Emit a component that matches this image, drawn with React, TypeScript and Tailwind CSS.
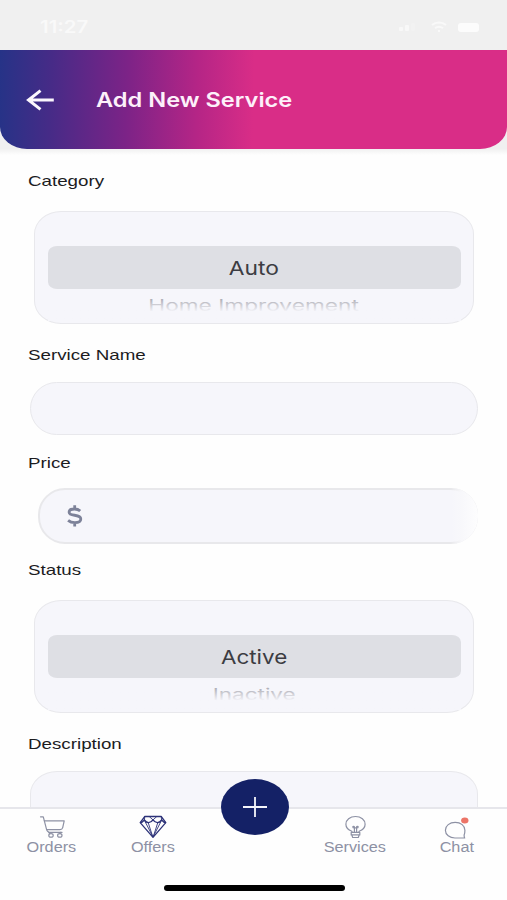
import { useState } from 'react';
import type { ReactNode } from 'react';

interface PickerProps {
  selected: string;
  next: string;
  selectedClass: string;
  nextClass: string;
}

function FieldLabel({ children, className }: { children: ReactNode; className: string }) {
  return (
    <div className={`flex items-center h-5 ml-7 text-[15px] leading-5 text-[#1c1c1e] ${className}`}>
      <span className="inline-block whitespace-nowrap origin-left scale-x-[1.25]">{children}</span>
    </div>
  );
}

function Picker({ selected, next, selectedClass, nextClass }: PickerProps) {
  return (
    <div className="ml-[34px] w-[440px] h-[113px] pt-[34px] px-[12.5px] rounded-[27px/23px] border-[1.5px] border-[#e8e8ec] bg-[#f6f6fb] font-['Inter',sans-serif]">
      <div className="h-[43px] rounded-[9px/7px] bg-[#dedfe4] flex items-center justify-center">
        <span className={`inline-block pt-[2px] text-[19px] leading-6 text-[#3c3c42] ${selectedClass}`}>{selected}</span>
      </div>
      {/* next option fades out towards the bottom of the wheel */}
      <div className="relative h-[32px] flex justify-center pt-[7px]">
        <span className={`inline-block h-6 whitespace-nowrap text-[18px] leading-6 text-[#a4a4ac] origin-top ${nextClass}`}>{next}</span>
        <div className="absolute inset-0 bg-linear-to-b from-[#f6f6fb]/0 from-25% to-[#f6f6fb] to-72%" />
      </div>
    </div>
  );
}

function CartIcon() {
  return (
    <svg width="28" height="24" viewBox="0 0 28 24" fill="none" stroke="#8d91a4" strokeWidth="1.2" strokeLinecap="round" strokeLinejoin="round">
      <path d="M2.5 1.8H5.3L8.6 14.6C8.9 15.9 9.4 16.6 11 17.4H24" />
      <path d="M6.3 5.8H26.2L24.7 12.6C24.4 13.9 23.6 14.6 22 14.6H8.6" />
      <path d="M11 17.4L11.6 18.6M22.6 17.4L22 18.6" />
      <ellipse cx="13" cy="20.4" rx="2.2" ry="1.8" />
      <ellipse cx="21.8" cy="20.4" rx="2.2" ry="1.8" />
    </svg>
  );
}

function DiamondIcon() {
  return (
    <svg width="28" height="24" viewBox="0 0 28 24" fill="none" stroke="#2c3278" strokeWidth="1.3" strokeLinejoin="round">
      <path d="M5.8 1.5H22.2L26.8 7.6L14 22.4L1.2 7.6Z" />
      <path d="M1.2 7.6C3.4 7.4 4.5 6.1 5.4 5C6.6 6.6 8 7.6 9.6 7.6C11.6 7.6 13.1 6.2 14 4.9C14.9 6.2 16.4 7.6 18.4 7.6C20 7.6 21.4 6.6 22.6 5C23.5 6.1 24.6 7.4 26.8 7.6" />
      <path d="M5.8 1.5L5.4 5M22.2 1.5L22.6 5M10.2 1.5L14 4.9L17.8 1.5M9.2 7.6L13.8 22M18.8 7.6L14.2 22M5.4 5.3L14 22M22.6 5.3L14 22" strokeWidth="0.9" />
    </svg>
  );
}

function BulbIcon() {
  return (
    <svg width="28" height="24" viewBox="0 0 28 24" fill="none" stroke="#8d91a4" strokeWidth="1.2" strokeLinejoin="round">
      <path d="M10.9 17.4V16.2C7.4 15 4.9 12.5 4.9 9.2C4.9 5 8.9 1.5 14.5 1.5C20.1 1.5 24.1 5 24.1 9.2C24.1 12.5 21.6 15 18.1 16.2V17.4" />
      <path d="M10.2 17.4H18.8V19.9H10.2ZM10.8 19.9H18.2L17.3 22.5H11.7Z" />
      <path d="M13.4 17.2V11.9C13.4 11.1 11.8 11 11.8 12C11.8 12.8 12.6 12.9 13.4 12.9H15.6C16.4 12.9 17.2 12.8 17.2 12C17.2 11 15.6 11.1 15.6 11.9V17.2" />
    </svg>
  );
}

function ChatIcon() {
  return (
    <svg width="28" height="24" viewBox="0 0 28 24" fill="none" stroke="#8d91a4" strokeWidth="1.2" strokeLinejoin="round">
      <path d="M21.7 23H12C6.6 23 2.4 19.8 2.4 15.2C2.4 10.8 6.6 7.4 12.2 7.4C17.8 7.4 21.9 10.8 21.9 15.2C21.9 17.4 21.7 19 21.1 20.1C21.1 21.5 21.3 22.4 21.7 23Z" />
      <ellipse cx="21.8" cy="5.6" rx="3.7" ry="3" fill="#ec7467" stroke="none" />
    </svg>
  );
}

const tabs = [
  { label: 'Orders', icon: <CartIcon />, place: 'w-[103px]' },
  { label: 'Offers', icon: <DiamondIcon />, place: 'w-[99px]' },
  { label: 'Services', icon: <BulbIcon />, place: 'w-[102px] ml-[102px]' },
  { label: 'Chat', icon: <ChatIcon />, place: 'w-[101px]' },
];

export default function App() {
  const [category] = useState('Auto');
  const [status] = useState('Active');

  return (
    <div className="w-[507px] h-[900px] overflow-hidden flex flex-col bg-[#fefefe] font-['Liberation_Sans',Arial,sans-serif]">
      {/* Status bar */}
      <div className="h-[50px] shrink-0 bg-[#f0f0f0] flex items-start justify-between pt-[16px] pl-[40px] pr-[28px]">
        <span className="inline-block origin-left scale-x-[1.2] text-[17px] leading-[22px] font-semibold text-[#f9f9f9] font-['Inter',sans-serif]">11:27</span>
        <div className="flex items-center gap-[11px] h-[22px]">
          <svg width="22" height="12" viewBox="0 0 22 12">
            <rect x="1" y="6" width="4" height="4" rx="1" fill="#f8f8f8" />
            <rect x="7" y="4" width="4" height="6" rx="1" fill="#f8f8f8" />
            <rect x="13" y="2" width="4" height="8" rx="1" fill="#f2f2f2" />
          </svg>
          <svg width="16" height="12" viewBox="0 0 16 12" fill="none" stroke="#f9f9f9" strokeWidth="2">
            <path d="M1 4C5 .8 11 .8 15 4M4 7.3C6.5 5.4 9.5 5.4 12 7.3M7 10H9" />
          </svg>
          <div className="w-[21px] h-[9px] rounded-[3px] bg-[#fcfcfc]" />
        </div>
      </div>

      {/* Header */}
      <div className="h-[105px] shrink-0 bg-linear-to-b from-[#f0f0f0] from-94% to-[#fefefe]">
        <div className="h-[99px] rounded-b-[27px_22px] bg-[linear-gradient(91deg,#263387_0%,#462b87_10%,#7c2387_25%,#b52586_39%,#d92d87_50%,#d92d87_100%)] flex items-center">
          <svg className="ml-[26px]" width="29" height="22" viewBox="0 0 29 22" fill="none" stroke="#fbf7fd" strokeWidth="3">
            <path d="M27.8 11H2.5M14.5 1.6L2.5 11L14.5 20.4" />
          </svg>
          <h1 className="ml-[41px] origin-left scale-x-[1.18] whitespace-nowrap text-[20px] leading-7 font-semibold text-[#fdf0fa] font-['Inter',sans-serif]">Add New Service</h1>
        </div>
      </div>

      {/* Form */}
      <div className="h-[652px] shrink-0 overflow-hidden">
        <FieldLabel className="mt-[16px]">Category</FieldLabel>
        <div className="h-[20px]" />
        <Picker selected={category} next="Home Improvement" selectedClass="scale-x-[1.2]" nextClass="scale-x-[1.26] scale-y-[0.85]" />

        <FieldLabel className="mt-[21px]">Service Name</FieldLabel>
        <div className="mt-[17px] ml-[30px] w-[448px] h-[53px] rounded-[27px] border-[1.5px] border-[#e8e8ec] bg-[#f6f6fb]" />

        <FieldLabel className="mt-[18px]">Price</FieldLabel>
        <div className="relative mt-[15px] ml-[38px] w-[440px] h-[56px] rounded-[27px] border-2 border-[#e8e8eb] bg-[#f6f6fb] flex items-center pl-[25px]">
          <svg width="19" height="24" viewBox="0 0 19 24" fill="none" stroke="#7d8299" strokeWidth="2.8">
            <path d="M15.2 7C13.7 5.6 11.7 5 9.4 5C6.1 5 4.1 6.2 4.1 8.2C4.1 13 15.8 9.4 15.8 15C15.8 17.2 13.4 18.6 9.9 18.6C7.2 18.6 4.6 17.7 3.1 16.4M9.7 1.2V5M9.7 18.6V22.6" />
          </svg>
          <div className="absolute -right-[2px] -top-[2px] w-[27px] h-[56px] rounded-r-[27px] bg-linear-to-r from-[#f7f7fb]/0 via-[#f8f8fb] via-40% to-[#fdfdfe]" />
        </div>

        <FieldLabel className="mt-[16px]">Status</FieldLabel>
        <div className="h-[20px]" />
        <Picker selected={status} next="Inactive" selectedClass="scale-x-[1.18]" nextClass="scale-x-[1.25] scale-y-[0.85]" />

        <FieldLabel className="mt-[21px]">Description</FieldLabel>
        <div className="mt-[17px] ml-[30px] w-[448px] h-[80px] rounded-[27px/23px] border-[1.5px] border-[#e8e8ec] bg-[#f6f6fb]" />
      </div>

      {/* Tab bar */}
      <div className="relative h-[93px] shrink-0 border-t-2 border-[#e6e6eb] bg-[#fefefe]">
        <div className="flex">
          {tabs.map(t => (
            <div key={t.label} className={`flex flex-col items-center pt-[6px] ${t.place}`}>
              {t.icon}
              <span className="inline-block scale-x-[1.16] text-[14px] leading-4 text-[#8d91a4]">{t.label}</span>
            </div>
          ))}
        </div>
        <button className="absolute left-[221px] -top-[30px] w-[68px] h-[56px] rounded-[50%] bg-[#142166] flex items-center justify-center">
          <svg width="26" height="20" viewBox="0 0 26 20" stroke="#f4f5fb" strokeWidth="1.8">
            <path d="M1 10H25M13 0V20" />
          </svg>
        </button>
        <div className="absolute left-[164px] top-[76px] w-[181px] h-[6px] rounded-full bg-black" />
      </div>
    </div>
  );
}
